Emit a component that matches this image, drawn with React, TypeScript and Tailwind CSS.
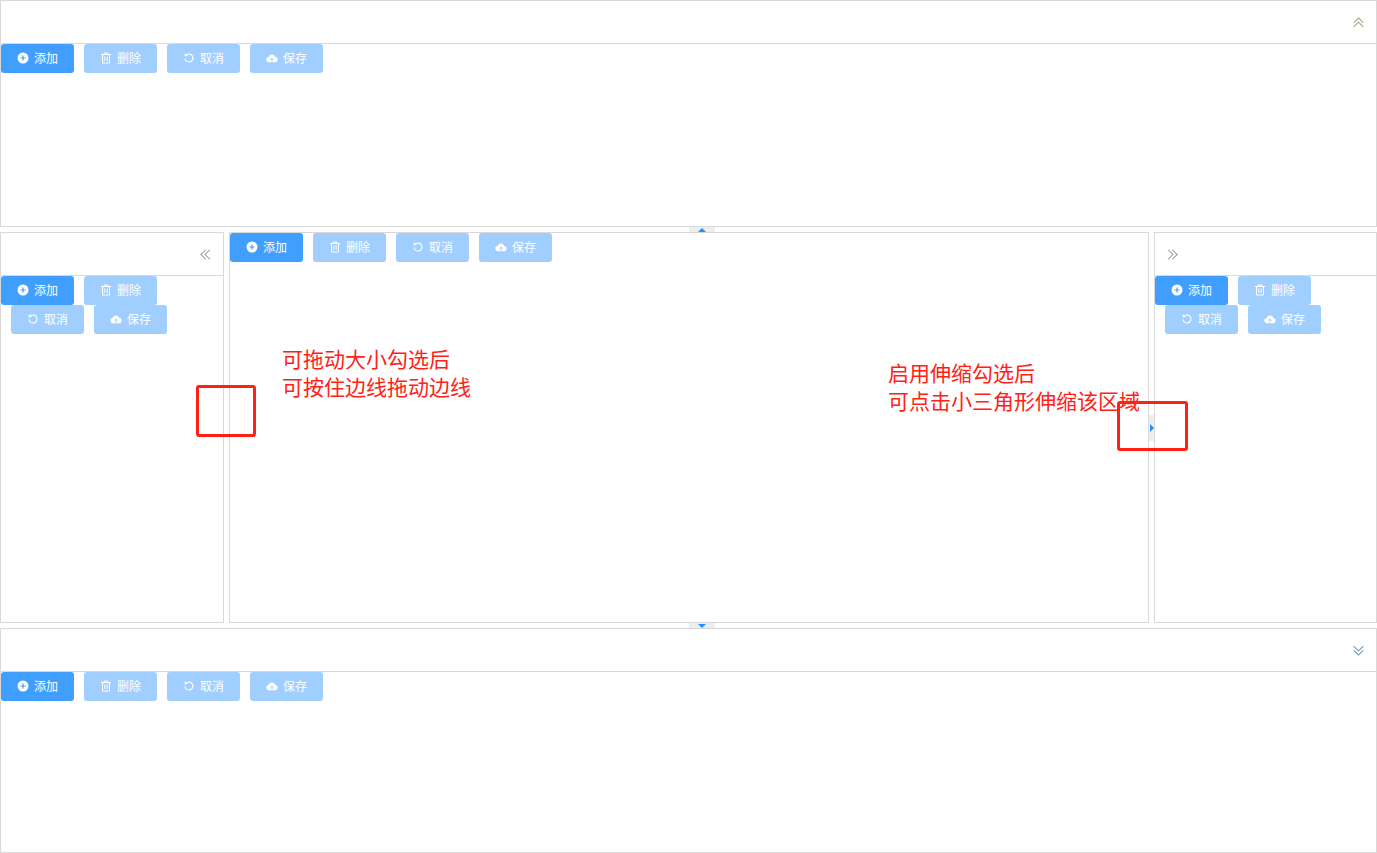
const font = { fontFamily: '"Noto Sans CJK SC", "Liberation Sans", sans-serif' };

const PlusIcon = () => (
  <svg width="12" height="12" viewBox="0 0 12 12" className="-translate-y-px">
    <circle cx="6" cy="6" r="5.5" fill="white" />
    <path d="M3.5 6h5M6 3.5v5" stroke="#409eff" strokeWidth="1.2" />
  </svg>
);

const TrashIcon = () => (
  <svg width="12" height="12" viewBox="0 0 12 12" fill="none" stroke="white" strokeWidth="1" className="-translate-y-px">
    <path d="M1 2.5h10M4.2 2.5v-1.5h3.6v1.5M2.5 2.5v8.5h7v-8.5M4.8 4.5v4.5M7.2 4.5v4.5" />
  </svg>
);

const RefreshIcon = () => (
  <svg width="12" height="12" viewBox="0 0 12 12" fill="none" stroke="white" strokeWidth="1.1" className="-translate-y-px">
    <path d="M3.4 3A4 4 0 1 1 2 6.4" />
    <path d="M2.2 1.4v2.2h2.2" />
  </svg>
);

const CloudIcon = () => (
  <svg width="12" height="12" viewBox="0 0 12 12" className="-translate-y-px">
    <path d="M3 10.2A2.6 2.6 0 0 1 2.7 5 3.4 3.4 0 0 1 9.2 5 2.6 2.6 0 0 1 9 10.2Z" fill="white" />
    <path d="M6 9.8V6.4M4.5 7.6 6 6.1l1.5 1.5" fill="none" stroke="#a0cfff" strokeWidth="1" />
  </svg>
);

const Chevrons = ({ dir, color }: { dir: "up" | "down" | "left" | "right"; color: string }) => {
  const rotate = { up: "", down: "rotate-180", left: "-rotate-90", right: "rotate-90" }[dir];
  return (
    <svg width="11" height="11" viewBox="0 0 12 12" fill="none" stroke={color} strokeWidth="1.1" className={rotate}>
      <path d="M0.8 6.2 6 1l5.2 5.2M0.8 10.8 6 5.6l5.2 5.2" />
    </svg>
  );
};

const Toolbar = ({ wrap }: { wrap?: boolean }) => {
  const btns = [
    { name: "添加", icon: <PlusIcon />, on: true },
    { name: "删除", icon: <TrashIcon /> },
    { name: "取消", icon: <RefreshIcon /> },
    { name: "保存", icon: <CloudIcon /> },
  ];
  return (
    <div className={wrap ? "flex flex-wrap" : "flex"}>
      {btns.map((b, i) => (
        <button
          key={b.name}
          className={`h-[29px] w-[73px] rounded-[3px] flex items-center justify-center gap-[5px] text-xs leading-none text-white ${i > 0 ? "ml-[10px]" : ""} ${b.on ? "bg-[#409eff]" : "bg-[#a0cfff]"}`}
        >
          {b.icon}
          <span className="-translate-y-px">{b.name}</span>
        </button>
      ))}
    </div>
  );
};

export default function App() {
  return (
    <div className="relative w-[1377px] h-[853px] bg-white flex flex-col overflow-hidden" style={font}>
      <div className="h-[227px] border border-[#d9d9d9]">
        <div className="h-[43px] border-b border-[#d9d9d9] flex items-center justify-end pr-[12px]">
          <Chevrons dir="up" color="#a8a078" />
        </div>
        <Toolbar />
      </div>

      {/* top collapse handle */}
      <div className="h-[5px] flex justify-center pl-[27px]">
        <div className="w-[26px] h-[5px] bg-[#eeeeee] flex items-center justify-center">
          <div className="w-0 h-0 border-x-[4px] border-x-transparent border-b-[4px] border-b-[#1e90ff]" />
        </div>
      </div>

      <div className="h-[391px] flex">
        <div className="w-[224px] border border-[#d9d9d9]">
          <div className="h-[43px] border-b border-[#d9d9d9] flex items-center justify-end pr-[12px]">
            <Chevrons dir="left" color="#8a9498" />
          </div>
          <Toolbar wrap />
        </div>
        <div className="w-[5px]" />
        <div className="w-[920px] border border-[#d9d9d9]">
          <Toolbar />
        </div>
        {/* right collapse handle */}
        <div className="w-[5px] flex items-center">
          <div className="w-[5px] h-[26px] bg-[#eeeeee] flex items-center pl-px">
            <div className="w-0 h-0 border-y-[4px] border-y-transparent border-l-[4px] border-l-[#1e90ff]" />
          </div>
        </div>
        <div className="flex-1 border border-[#d9d9d9]">
          <div className="h-[43px] border-b border-[#d9d9d9] flex items-center pl-[12px]">
            <Chevrons dir="right" color="#8a9a80" />
          </div>
          <Toolbar wrap />
        </div>
      </div>

      {/* bottom collapse handle */}
      <div className="h-[5px] flex justify-center pl-[27px]">
        <div className="w-[26px] h-[5px] bg-[#eeeeee] flex items-center justify-center">
          <div className="w-0 h-0 border-x-[4px] border-x-transparent border-t-[4px] border-t-[#1e90ff]" />
        </div>
      </div>

      <div className="flex-1 border border-[#d9d9d9]">
        <div className="h-[43px] border-b border-[#d9d9d9] flex items-center justify-end pr-[12px]">
          <Chevrons dir="down" color="#6f93b0" />
        </div>
        <Toolbar />
      </div>

      {/* annotations drawn over the screenshot */}
      <div className="absolute left-[196px] top-[385px] w-[60px] h-[52px] border-[3px] border-[#ff2116] rounded-[3px]" />
      <div className="absolute left-[1117px] top-[401px] w-[71px] h-[50px] border-[3px] border-[#ff2116] rounded-[3px]" />
      <div className="absolute left-[282px] top-[344px] text-[21px] leading-[28px] text-[#ff2116] whitespace-nowrap">
        <p>可拖动大小勾选后</p>
        <p>可按住边线拖动边线</p>
      </div>
      <div className="absolute left-[888px] top-[358px] text-[21px] leading-[28px] text-[#ff2116] whitespace-nowrap">
        <p>启用伸缩勾选后</p>
        <p>可点击小三角形伸缩该区域</p>
      </div>
    </div>
  );
}
